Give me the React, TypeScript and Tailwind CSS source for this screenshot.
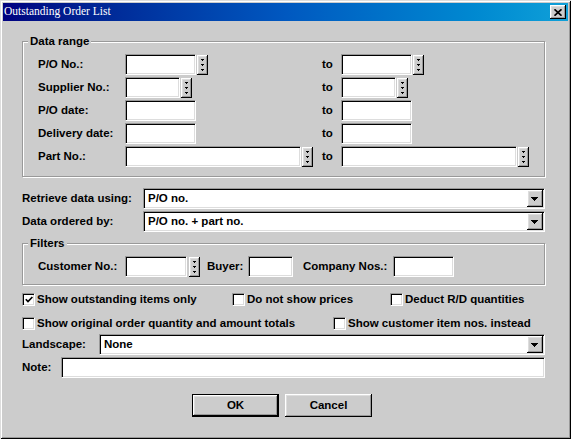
import React from 'react';

// Outstanding Order List dialog (classic Windows look)
const sunken =
  'bg-white border border-t-[#999] border-l-[#999] border-b-white border-r-white shadow-[inset_1px_1px_0_#000,inset_-1px_-1px_0_#ddd]';
const raised =
  'bg-[#ccc] shadow-[inset_-1px_-1px_0_#000,inset_1px_1px_0_#fff,inset_-2px_-2px_0_#999,inset_2px_2px_0_#ddd]';

function Field({ w, h = 'h-[21px]' }: { w: string; h?: string }) {
  return <div className={`${sunken} ${w} ${h}`} />;
}

function Spin() {
  return (
    <div className={`${raised} w-[11px] h-[20px] shrink-0`}>
      <svg width="11" height="20" viewBox="0 0 11 20" shapeRendering="crispEdges">
        {[4, 9, 14].map((y) => (
          <g key={y} fill="#000">
            <rect x="4" y={y} width="3" height="1" />
            <rect x="5" y={y + 1} width="1" height="1" />
          </g>
        ))}
      </svg>
    </div>
  );
}

function Combo({ value }: { value: string }) {
  return (
    <div className={`${sunken} h-[21px] flex-1 flex p-[1px]`}>
      <div className="flex-1 flex items-center pl-[3px] leading-none">{value}</div>
      <div className={`${raised} w-[16px] h-full`}>
        <svg width="16" height="17" viewBox="0 0 16 17" shapeRendering="crispEdges" fill="#000">
          <rect x="4" y="7" width="7" height="1" />
          <rect x="5" y="8" width="5" height="1" />
          <rect x="6" y="9" width="3" height="1" />
          <rect x="7" y="10" width="1" height="1" />
        </svg>
      </div>
    </div>
  );
}

function Check({ w = '', checked = false, label }: { w?: string; checked?: boolean; label: string }) {
  return (
    <div className={`flex items-center gap-[2px] ${w}`}>
      <div className={`${sunken} w-[13px] h-[13px] flex items-center justify-center`}>
        {checked && (
          <svg width="8" height="7" viewBox="0 0 8 7">
            <path d="M0.8 3.2 L3 5.6 L7.4 1" stroke="#000" strokeWidth="1.7" fill="none" />
          </svg>
        )}
      </div>
      <span className="leading-none">{label}</span>
    </div>
  );
}

function RangeRow({ label, left, right }: { label: string; left: React.ReactNode; right: React.ReactNode }) {
  return (
    <div className="flex items-center h-[21px]">
      <div className="w-[87px]">{label}</div>
      <div className="w-[197px] flex items-center gap-[1px]">{left}</div>
      <div className="w-[19px]">to</div>
      <div className="flex items-center gap-[1px]">{right}</div>
    </div>
  );
}

export default function App() {
  return (
    <div className="w-[571px] h-[439px] bg-[#ccc] p-[3px] flex flex-col shadow-[inset_1px_1px_0_#ddd,inset_-1px_-1px_0_#000,inset_2px_2px_0_#fff,inset_-2px_-2px_0_#999] font-['Liberation_Sans',Arial,sans-serif] font-bold text-[11.5px] text-black">
      <div className="h-[18px] flex items-center pl-[1px] pr-[2px] bg-linear-to-r from-[#000080] via-[#0058c0] to-[#10a0d8]">
        <span className="font-['Liberation_Serif','Times_New_Roman',serif] font-normal text-[11.5px] text-white leading-none">
          Outstanding Order List
        </span>
        <div className={`${raised} ml-auto w-[16px] h-[14px] flex items-center justify-center`}>
          <svg width="8" height="7" viewBox="0 0 8 7">
            <path d="M0.5 0.3 L7.5 6.7 M7.5 0.3 L0.5 6.7" stroke="#000" strokeWidth="1.7" />
          </svg>
        </div>
      </div>

      <div className="pl-[19px] pr-[23px] flex flex-col">
        <fieldset className="mt-[14px] p-0 border border-[#999] shadow-[1px_1px_0_#fff,inset_1px_1px_0_#fff]">
          <legend className="ml-[5px] px-[2px] leading-[13px] bg-[#ccc]">Data range</legend>
          <div className="pl-[15px] pt-[6px] pb-[9px] flex flex-col gap-[2px]">
            <RangeRow
              label="P/O No.:"
              left={<><Field w="w-[71px]" /><Spin /></>}
              right={<><Field w="w-[71px]" /><Spin /></>}
            />
            <RangeRow
              label="Supplier No.:"
              left={<><Field w="w-[55px]" /><Spin /></>}
              right={<><Field w="w-[55px]" /><Spin /></>}
            />
            <RangeRow label="P/O date:" left={<Field w="w-[71px]" />} right={<Field w="w-[71px]" />} />
            <RangeRow label="Delivery date:" left={<Field w="w-[71px]" />} right={<Field w="w-[71px]" />} />
            <RangeRow
              label="Part No.:"
              left={<><Field w="w-[176px]" /><Spin /></>}
              right={<><Field w="w-[176px]" /><Spin /></>}
            />
          </div>
        </fieldset>

        <div className="mt-[11px] flex items-center">
          <div className="w-[121px]">Retrieve data using:</div>
          <Combo value="P/O no." />
        </div>
        <div className="mt-[2px] flex items-center">
          <div className="w-[121px]">Data ordered by:</div>
          <Combo value="P/O no. + part no." />
        </div>

        <fieldset className="mt-[5px] p-0 border border-[#999] shadow-[1px_1px_0_#fff,inset_1px_1px_0_#fff]">
          <legend className="ml-[5px] px-[2px] leading-[13px] bg-[#ccc]">Filters</legend>
          <div className="pl-[15px] pt-[6px] pb-[7px] flex items-center h-[34px]">
            <div className="w-[87px]">Customer No.:</div>
            <Field w="w-[62px]" />
            <div className="ml-[2px]"><Spin /></div>
            <div className="w-[48px] pl-[7px]">Buyer:</div>
            <Field w="w-[45px]" />
            <div className="w-[100px] pl-[10px]">Company Nos.:</div>
            <Field w="w-[61px]" />
          </div>
        </fieldset>

        <div className="mt-[8px] flex items-center h-[13px]">
          <Check w="w-[210px]" checked label="Show outstanding items only" />
          <Check w="w-[158px]" label="Do not show prices" />
          <Check label="Deduct R/D quantities" />
        </div>
        <div className="mt-[11px] flex items-center h-[13px]">
          <Check w="w-[311px]" label="Show original order quantity and amount totals" />
          <Check label="Show customer item nos. instead" />
        </div>

        <div className="mt-[4px] flex items-center">
          <div className="w-[77px]">Landscape:</div>
          <Combo value="None" />
        </div>
        <div className="mt-[2px] flex items-center">
          <div className="w-[39px]">Note:</div>
          <div className="flex-1"><Field w="w-full" /></div>
        </div>

        <div className="mt-[16px] flex ml-[170px] gap-[6px]">
          <button className="w-[87px] h-[23px] border border-black p-0">
            <div className={`${raised} w-full h-full flex items-center justify-center leading-none`}>OK</div>
          </button>
          <button className={`${raised} w-[87px] h-[23px] flex items-center justify-center leading-none`}>
            Cancel
          </button>
        </div>
      </div>
    </div>
  );
}
